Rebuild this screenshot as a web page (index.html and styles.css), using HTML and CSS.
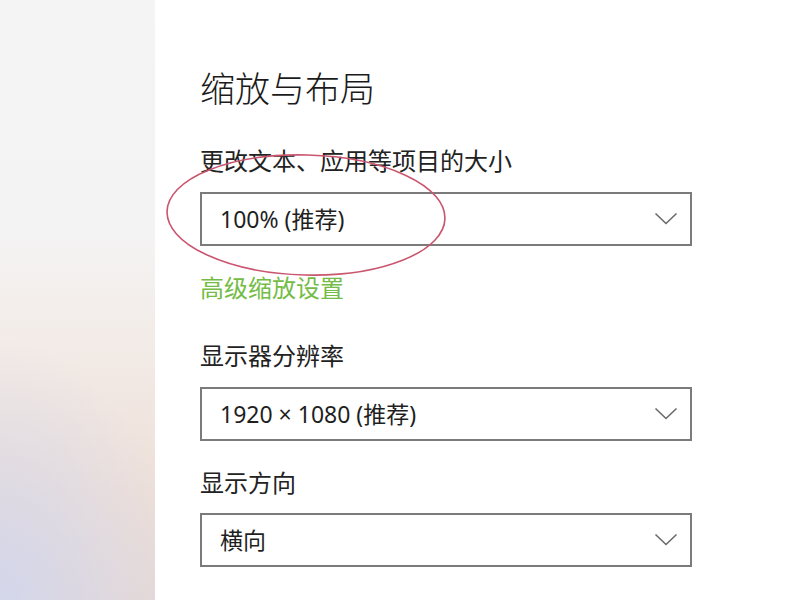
FILE: index.html
```html
<!DOCTYPE html>
<html lang="zh-CN">
<head>
<meta charset="utf-8">
<title>缩放与布局</title>
<link rel="stylesheet" href="styles.css">
</head>
<body>
<div class="page">
  <aside class="side"></aside>
  <main class="main">
    <h1 class="title">缩放与布局</h1>
    <div class="label">更改文本、应用等项目的大小</div>
    <div class="select">
      <span class="value">100% (推荐)</span>
      <svg class="chev" width="24" height="14" viewBox="0 0 24 14"><path d="M1.5 1.5 L12 11.5 L22.5 1.5" fill="none" stroke="#6a6a6a" stroke-width="1.6"/></svg>
    </div>
    <a class="link">高级缩放设置</a>
    <div class="label gap-lg">显示器分辨率</div>
    <div class="select">
      <span class="value">1920 × 1080 (推荐)</span>
      <svg class="chev" width="24" height="14" viewBox="0 0 24 14"><path d="M1.5 1.5 L12 11.5 L22.5 1.5" fill="none" stroke="#6a6a6a" stroke-width="1.6"/></svg>
    </div>
    <div class="label gap-sm">显示方向</div>
    <div class="select sel-last">
      <span class="value">横向</span>
      <svg class="chev" width="24" height="14" viewBox="0 0 24 14"><path d="M1.5 1.5 L12 11.5 L22.5 1.5" fill="none" stroke="#6a6a6a" stroke-width="1.6"/></svg>
    </div>
    <svg class="mark" width="300" height="136" viewBox="0 0 300 136">
      <ellipse cx="150" cy="66" rx="139" ry="60" transform="rotate(1.5 150 66)" fill="none" stroke="#c9566f" stroke-width="1.6"/>
    </svg>
  </main>
</div>
</body>
</html>
```
FILE: styles.css
```css
* { box-sizing: border-box; }
html, body { margin: 0; padding: 0; }
body {
  width: 800px;
  height: 600px;
  overflow: hidden;
  background: #ffffff;
  font-family: "Noto Sans CJK SC", "Noto Sans", sans-serif;
  color: #1f1f1f;
}
.page {
  display: flex;
  height: 600px;
}
.side {
  width: 155px;
  flex: none;
  background:
    radial-gradient(ellipse 180px 260px at 0% 100%, rgba(210,214,236,0.95), rgba(210,214,236,0) 100%),
    linear-gradient(to bottom, #f4f4f4 0%, #f4f3f3 40%, #f2e9e4 62%, #eddfd8 82%, #e6d9d6 100%);
}
.main {
  position: relative;
  flex: 1;
  padding: 63px 0 0 45px;
  display: flex;
  flex-direction: column;
  align-items: flex-start;
}
.title {
  margin: 0;
  font-size: 35px;
  font-weight: 300;
  line-height: 48px;
  color: #1b1b1b;
}
.label {
  margin-top: 31px;
  font-size: 24px;
  line-height: 36px;
  color: #222;
}
.label.gap-lg { margin-top: 32px; }
.label.gap-sm { margin-top: 23px; }
.select {
  margin-top: 14px;
  width: 492px;
  height: 54px;
  border: 2px solid #7b7b7b;
  display: flex;
  align-items: center;
  justify-content: space-between;
  padding: 0 12px 0 18px;
  background: #fff;
}
.sel-last { margin-top: 13px; }
.value {
  font-family: "Noto Sans", "Noto Sans CJK SC", sans-serif;
  font-size: 23px;
  line-height: 30px;
  color: #1f1f1f;
}
.chev { display: block; }
.link {
  margin-top: 23px;
  font-size: 24px;
  line-height: 36px;
  color: #74bc46;
}
.mark {
  position: absolute;
  left: 1px;
  top: 149px;
  pointer-events: none;
}
```
